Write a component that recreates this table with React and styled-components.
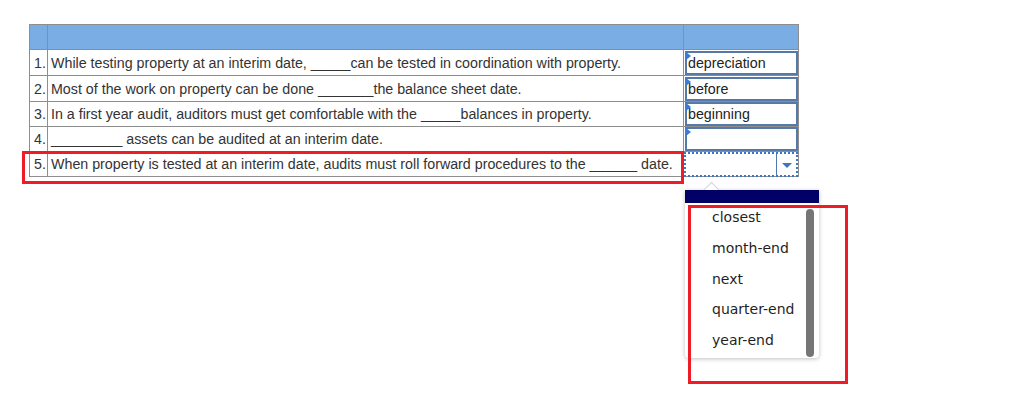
import styled, { createGlobalStyle } from "styled-components";

const GlobalStyle = createGlobalStyle`
	body {
		margin: 0;
		background: #ffffff;
		font-family: "Liberation Sans", Arial, sans-serif;
		color: #222222;
	}
`;

const Page = styled.div`
	width: 1018px;
	height: 403px;
	padding: 24px 0 0 29px;
	box-sizing: border-box;
`;

const Stage = styled.div`
	position: relative;
	width: 770px;
`;

const Table = styled.table`
	border-collapse: collapse;
	table-layout: fixed;
	width: 770px;
	font-size: 14.25px;

	td,
	th {
		border: 1px solid #8e8e8e;
		padding: 0;
	}

	th {
		background: #79ade3;
		height: 24px;
	}
`;

const Row = styled.tr`
	height: ${(p) => (p.$tall ? 26 : 25)}px;
`;

const Num = styled.td`
	width: 17px;
	text-align: right;
	padding-right: 1px !important;
	color: #333333;
`;

const Question = styled.td`
	padding-left: 3px !important;
	white-space: nowrap;
	color: #333333;
`;

const AnswerCell = styled.td`
	width: 114px;
	position: relative;
`;

const Answer = styled.div`
	position: relative;
	box-sizing: border-box;
	height: 24px;
	margin: 0 0 0 1px;
	border: 2px solid #5679a8;
	padding: 1px 0 0 1px;
	font-size: 14.25px;
	line-height: 18px;
	color: #222222;

	&::before {
		content: "";
		position: absolute;
		left: -1px;
		top: -1px;
		border-left: 5px solid #3a7bd5;
		border-top: 4px solid transparent;
		border-bottom: 4px solid transparent;
	}
`;

const Select = styled.div`
	box-sizing: border-box;
	height: 25px;
	margin: 0 0 -1px 0;
	border: 2px dotted #3a76c4;
	display: flex;
	justify-content: flex-end;
`;

const SelectButton = styled.div`
	width: 19px;
	border-left: 1px solid #4f78b3;
	display: flex;
	align-items: center;
	justify-content: center;

	&::after {
		content: "";
		border-top: 5px solid #3a76c4;
		border-left: 5px solid transparent;
		border-right: 5px solid transparent;
		margin-top: 1px;
	}
`;

const Highlight = styled.div`
	position: absolute;
	border: 3px solid #ee1c25;
	box-sizing: border-box;
	pointer-events: none;
`;

const Menu = styled.div`
	position: absolute;
	left: 656px;
	top: 166px;
	width: 134px;
	background: #ffffff;
	border-radius: 0 0 4px 4px;
	box-shadow: 0 1px 4px rgba(0, 0, 0, 0.25);
	font-family: "DejaVu Sans", Verdana, sans-serif;
	font-size: 14px;

	&::before {
		content: "";
		position: absolute;
		left: 21px;
		top: -6px;
		width: 10px;
		height: 10px;
		background: #ffffff;
		border-left: 1px solid #d4d4d4;
		border-top: 1px solid #d4d4d4;
		transform: rotate(45deg);
	}
`;

const MenuHead = styled.div`
	position: relative;
	height: 13px;
	background: #000066;
`;

const MenuList = styled.div`
	position: relative;
	padding: 0 0 1px 27px;
`;

const Option = styled.div`
	height: 30.75px;
	line-height: 28px;
	color: #1f1f1f;
`;

const Scroll = styled.div`
	position: absolute;
	right: 5px;
	top: 6px;
	bottom: 1px;
	width: 8px;
	border-radius: 4px;
	background: #757575;
`;

const rows = [
	["While testing property at an interim date, _____can be tested in coordination with property.", "depreciation"],
	["Most of the work on property can be done _______the balance sheet date.", "before"],
	["In a first year audit, auditors must get comfortable with the _____balances in property.", "beginning"],
	["_________ assets can be audited at an interim date.", ""],
];

const options = ["closest", "month-end", "next", "quarter-end", "year-end"];

export default function App() {
	return (
		<Page>
			<GlobalStyle />
			<Stage>
				<Table>
					<thead>
						<tr>
							<th style={{ width: 17 }}></th>
							<th></th>
							<th style={{ width: 114 }}></th>
						</tr>
					</thead>
					<tbody>
						{rows.map(([text, answer], i) => (
							<Row key={i} $tall={i < 2}>
								<Num>{i + 1}.</Num>
								<Question>{text}</Question>
								<AnswerCell>
									<Answer>{answer}</Answer>
								</AnswerCell>
							</Row>
						))}
						<Row>
							<Num>5.</Num>
							<Question>When property is tested at an interim date, audits must roll forward procedures to the ______ date.</Question>
							<AnswerCell>
								<Select>
									<SelectButton />
								</Select>
							</AnswerCell>
						</Row>
					</tbody>
				</Table>
				<Highlight style={{ left: -7, top: 127, width: 662, height: 33 }} />
				<Menu>
					<MenuHead />
					<MenuList>
						{options.map((o) => (
							<Option key={o}>{o}</Option>
						))}
						<Scroll />
					</MenuList>
				</Menu>
				<Highlight style={{ left: 659, top: 181, width: 160, height: 179 }} />
			</Stage>
		</Page>
	);
}
